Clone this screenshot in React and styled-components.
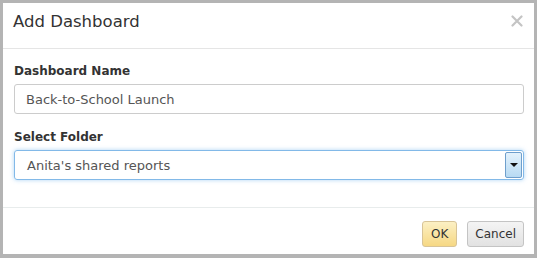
import React, { useState } from "react";
import styled, { createGlobalStyle } from "styled-components";

const GlobalStyle = createGlobalStyle`
  html, body {
    margin: 0;
    padding: 0;
    background: #b4b4b4;
  }
  body {
    font-family: "DejaVu Sans", Verdana, sans-serif;
  }
`;

const Dialog = styled.div`
  margin: 3px 3px 4px 3px;
  height: 251px;
  background: #fff;
  display: flex;
  flex-direction: column;
  box-sizing: border-box;
`;

const Header = styled.div`
  height: 46px;
  display: flex;
  align-items: flex-start;
  justify-content: space-between;
  padding: 9px 11px 0 10px;
  border-bottom: 1px solid #e5e5e5;
  box-sizing: border-box;
`;

const Title = styled.h3`
  margin: 0;
  font-size: 16.5px;
  font-weight: normal;
  color: #333;
`;

const Close = styled.button`
  border: 0;
  background: none;
  padding: 0;
  margin-top: 3px;
  width: 12px;
  height: 12px;
  cursor: pointer;
  display: flex;
`;

const Body = styled.div`
  flex: 1;
  padding: 15px 10px 0 11px;
  border-bottom: 1px solid #e8ecec;
`;

const Label = styled.label`
  display: block;
  font-size: 12px;
  font-weight: bold;
  color: #333;
  margin-bottom: 6px;
`;

const Field = styled.div`
  margin-bottom: 16px;
`;

const TextInput = styled.input`
  display: block;
  width: 100%;
  height: 30px;
  box-sizing: border-box;
  border: 1px solid #ccc;
  border-radius: 3px;
  padding: 0 11px;
  font-family: "DejaVu Sans", sans-serif;
  font-size: 13px;
  color: #555;
  outline: none;
`;

const SelectBox = styled.div`
  height: 30px;
  box-sizing: border-box;
  border: 1px solid #82b9e8;
  border-radius: 3px;
  box-shadow: 0 0 4px rgba(102, 175, 233, 0.55);
  display: flex;
  align-items: center;
  padding-left: 12px;
  font-size: 13px;
  color: #555;
`;

const SelectText = styled.span`
  flex: 1;
`;

const Arrow = styled.div`
  width: 17px;
  height: 26px;
  margin-right: 1px;
  box-sizing: border-box;
  border: 1px solid #6f9fcc;
  border-radius: 2px;
  background: linear-gradient(#e4f2fc, #b7daf3);
  display: flex;
  align-items: center;
  justify-content: center;
  &::after {
    content: "";
    border-left: 4px solid transparent;
    border-right: 4px solid transparent;
    border-top: 4px solid #111;
  }
`;

const Footer = styled.div`
  flex: 0 0 auto;
  height: 46px;
  box-sizing: border-box;
  display: flex;
  align-items: flex-start;
  justify-content: flex-end;
  gap: 10px;
  padding: 13px 10px 0 0;
`;

const Button = styled.button`
  height: 26px;
  padding: 0 ${(p) => (p.$primary ? "8px" : "7px")};
  box-sizing: border-box;
  border: 1px solid ${(p) => (p.$primary ? "#d8c497" : "#c4c4c4")};
  border-radius: 3px;
  background: ${(p) =>
    p.$primary
      ? "linear-gradient(#fcf0c4, #f6d884)"
      : "linear-gradient(#f4f4f4, #e2e2e2)"};
  font-family: "DejaVu Sans", sans-serif;
  font-size: 12px;
  color: #333;
  cursor: pointer;
`;

export default function App() {
  const [name, setName] = useState("Back-to-School Launch");

  return (
    <>
      <GlobalStyle />
      <Dialog>
        <Header>
          <Title>Add Dashboard</Title>
          <Close aria-label="Close">
            <svg width="12" height="12" viewBox="0 0 12 12">
              <path
                d="M1.5 1.5 L10.5 10.5 M10.5 1.5 L1.5 10.5"
                stroke="#c4c4c4"
                strokeWidth="2.2"
                strokeLinecap="round"
              />
            </svg>
          </Close>
        </Header>
        <Body>
          <Field>
            <Label>Dashboard Name</Label>
            <TextInput value={name} onChange={(e) => setName(e.target.value)} />
          </Field>
          <Field>
            <Label>Select Folder</Label>
            <SelectBox>
              <SelectText>Anita's shared reports</SelectText>
              <Arrow />
            </SelectBox>
          </Field>
        </Body>
        <Footer>
          <Button $primary>OK</Button>
          <Button>Cancel</Button>
        </Footer>
      </Dialog>
    </>
  );
}
